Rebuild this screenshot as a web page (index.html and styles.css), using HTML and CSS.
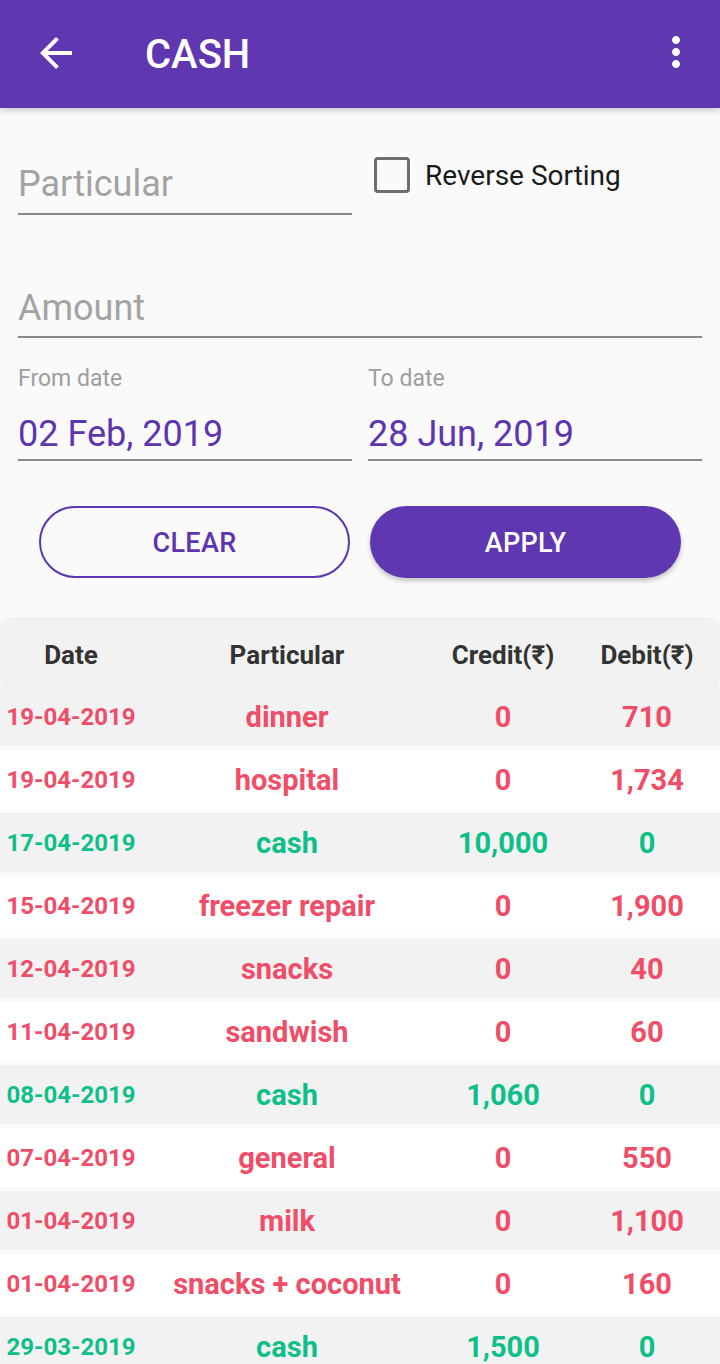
FILE: index.html
```html
<!DOCTYPE html>
<html>
<head>
<meta charset="utf-8">
<link rel="stylesheet" href="styles.css">
</head>
<body>
<header class="toolbar">
  <span class="tb-icon back">
    <svg viewBox="0 0 24 24" width="48" height="48"><path fill="#fff" d="M20 11H7.830l5.590-5.590L12 4l-8 8 8 8 1.410-1.410L7.830 13H20v-2z"/></svg>
  </span>
  <h1 class="title">CASH</h1>
  <span class="tb-icon more">
    <svg viewBox="0 0 24 24" width="48" height="48"><path fill="#fff" d="M12 8c1.1 0 2-.9 2-2s-.9-2-2-2-2 .9-2 2 .9 2 2 2zm0 2c-1.1 0-2 .9-2 2s.9 2 2 2 2-.9 2-2-.9-2-2-2zm0 6c-1.1 0-2 .9-2 2s.9 2 2 2 2-.9 2-2-.9-2-2-2z"/></svg>
  </span>
</header>

<section class="filters">
  <div class="row-top">
    <div class="field half"><span class="placeholder">Particular</span></div>
    <label class="check"><span class="box"></span><span class="check-text">Reverse Sorting</span></label>
  </div>
  <div class="field full amount"><span class="placeholder">Amount</span></div>
  <div class="dates">
    <div class="date-col">
      <div class="date-label">From date</div>
      <div class="field date-value">02 Feb, 2019</div>
    </div>
    <div class="date-col">
      <div class="date-label">To date</div>
      <div class="field date-value">28 Jun, 2019</div>
    </div>
  </div>
  <div class="buttons">
    <button class="btn btn-outline">CLEAR</button>
    <button class="btn btn-fill">APPLY</button>
  </div>
</section>

<section class="table">
  <div class="thead">
    <span>Date</span><span>Particular</span><span>Credit(₹)</span><span>Debit(₹)</span>
  </div>
  <div class="tr odd debit"><span class="d">19-04-2019</span><span>dinner</span><span>0</span><span>710</span></div>
  <div class="tr even debit"><span class="d">19-04-2019</span><span>hospital</span><span>0</span><span>1,734</span></div>
  <div class="tr odd credit"><span class="d">17-04-2019</span><span>cash</span><span>10,000</span><span>0</span></div>
  <div class="tr even debit"><span class="d">15-04-2019</span><span>freezer repair</span><span>0</span><span>1,900</span></div>
  <div class="tr odd debit"><span class="d">12-04-2019</span><span>snacks</span><span>0</span><span>40</span></div>
  <div class="tr even debit"><span class="d">11-04-2019</span><span>sandwish</span><span>0</span><span>60</span></div>
  <div class="tr odd credit"><span class="d">08-04-2019</span><span>cash</span><span>1,060</span><span>0</span></div>
  <div class="tr even debit"><span class="d">07-04-2019</span><span>general</span><span>0</span><span>550</span></div>
  <div class="tr odd debit"><span class="d">01-04-2019</span><span>milk</span><span>0</span><span>1,100</span></div>
  <div class="tr even debit"><span class="d">01-04-2019</span><span>snacks + coconut</span><span>0</span><span>160</span></div>
  <div class="tr odd credit"><span class="d">29-03-2019</span><span>cash</span><span>1,500</span><span>0</span></div>
</section>
</body>
</html>
```

FILE: styles.css
```css
* { box-sizing: border-box; }
html, body { margin: 0; padding: 0; }
body {
  background: #fafafa;
  font-family: Roboto, "Liberation Sans", sans-serif;
  width: 720px;
  height: 1364px;
  overflow: hidden;
}

.toolbar {
  position: relative;
  z-index: 2;
  height: 108px;
  background: #5f37b1;
  display: flex;
  align-items: center;
  padding: 0 20px 0 32px;
  box-shadow: 0 2px 6px rgba(0, 0, 0, 0.22);
}
.tb-icon { display: flex; width: 48px; height: 48px; }
.tb-icon.back { margin-top: -2px; }
.tb-icon.more { margin-left: auto; margin-top: -4px; }
.title {
  margin: 0 0 0 65px;
  color: #fff;
  font-size: 40px;
  font-weight: 500;
  letter-spacing: 0;
}

.filters { padding: 0 18px; }

.row-top { display: flex; margin-top: 54px; }
.field {
  line-height: 44px;
  padding-bottom: 7px;
  border-bottom: 2px solid #8a8a8a;
  font-size: 36px;
}
.field.half { width: 334px; }
.placeholder { color: #a3a3a3; }
.check {
  display: flex;
  align-items: center;
  margin-left: 22px;
  margin-top: -5px;
  height: 36px;
}
.box {
  width: 36px;
  height: 36px;
  border: 3.5px solid #6e6e6e;
  border-radius: 4px;
}
.check-text {
  margin-left: 15px;
  font-size: 28px;
  color: #1a1a1a;
  margin-top: 0;
}

.amount { margin-top: 71px; padding-bottom: 6px; }

.dates {
  display: grid;
  grid-template-columns: 334px 334px;
  column-gap: 16px;
  margin-top: 27px;
}
.date-label {
  font-size: 23px;
  line-height: 28px;
  color: #9e9e9e;
}
.date-value {
  margin-top: 19px;
  font-size: 36px;
  color: #5e35b1;
  padding-bottom: 3px;
}

.buttons {
  display: grid;
  grid-template-columns: 311px 311px;
  column-gap: 20px;
  padding: 0 21px;
  margin-top: 45px;
}
.btn {
  height: 72px;
  border-radius: 36px;
  font-family: Roboto, "Liberation Sans", sans-serif;
  font-size: 27px;
  font-weight: 500;
  letter-spacing: 0.3px;
  padding: 2px 0 0;
}
.btn-outline {
  background: transparent;
  border: 2px solid #5e35b1;
  color: #5e35b1;
}
.btn-fill {
  background: #5f37b1;
  border: none;
  color: #fff;
  box-shadow: 0 3px 5px rgba(0, 0, 0, 0.22);
}

.table { margin-top: 39px; }
.thead, .tr {
  display: grid;
  grid-template-columns: 142px 290px 142px 146px;
  align-items: center;
  text-align: center;
}
.thead {
  position: relative;
  z-index: 1;
  height: 74px;
  padding-top: 2px;
  background: #f2f2f2;
  border-radius: 12px;
  font-size: 26px;
  font-weight: 700;
  color: #333;
}
.tr {
  height: 59px;
  margin-bottom: 4px;
  font-size: 29px;
  font-weight: 700;
  white-space: nowrap;
}
.thead + .tr { margin-top: -4px; }
.tr.odd { background: #f2f2f2; }
.tr.even { background: #ffffff; }
.tr .d { font-size: 24px; }
.tr.debit { color: #ef4d68; }
.tr.credit { color: #0fbf89; }
```
